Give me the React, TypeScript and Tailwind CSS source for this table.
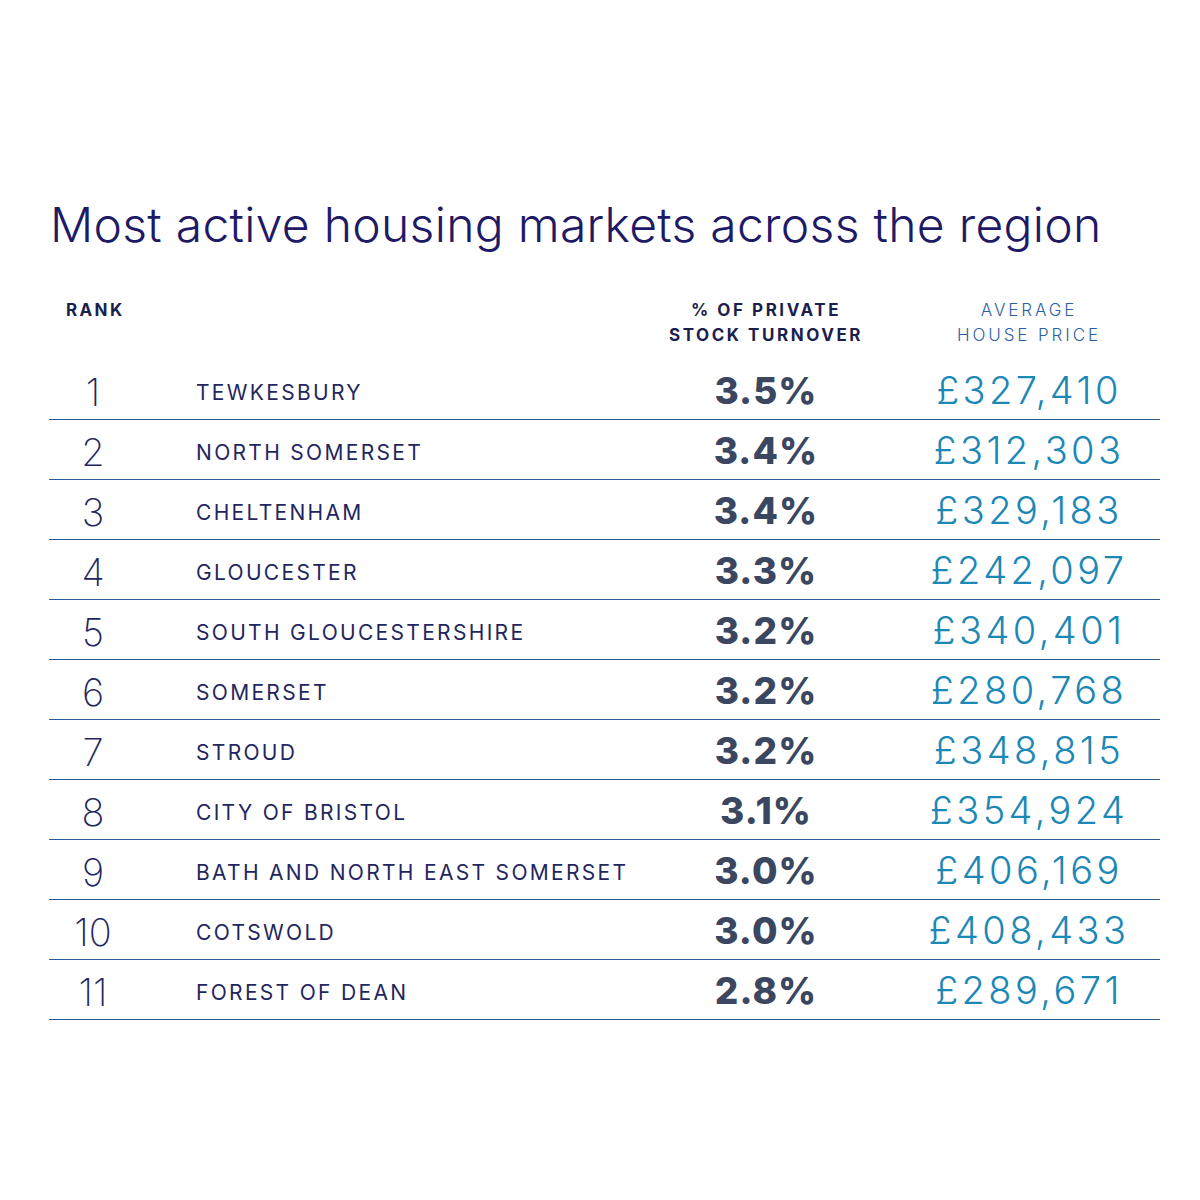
const ROWS = [
  { rank: 1, area: "TEWKESBURY", pct: "3.5%", price: "£327,410" },
  { rank: 2, area: "NORTH SOMERSET", pct: "3.4%", price: "£312,303" },
  { rank: 3, area: "CHELTENHAM", pct: "3.4%", price: "£329,183" },
  { rank: 4, area: "GLOUCESTER", pct: "3.3%", price: "£242,097" },
  { rank: 5, area: "SOUTH GLOUCESTERSHIRE", pct: "3.2%", price: "£340,401" },
  { rank: 6, area: "SOMERSET", pct: "3.2%", price: "£280,768" },
  { rank: 7, area: "STROUD", pct: "3.2%", price: "£348,815" },
  { rank: 8, area: "CITY OF BRISTOL", pct: "3.1%", price: "£354,924" },
  { rank: 9, area: "BATH AND NORTH EAST SOMERSET", pct: "3.0%", price: "£406,169" },
  { rank: 10, area: "COTSWOLD", pct: "3.0%", price: "£408,433" },
  { rank: 11, area: "FOREST OF DEAN", pct: "2.8%", price: "£289,671" },
];

export default function App() {
  return (
    <div className="min-h-[1200px] w-[1200px] bg-white font-['Inter',sans-serif]">
      <div className="pl-[49px] pr-[40px] pt-[196px]">
        <h1 className="pl-px text-[48px] font-light leading-[58px] tracking-[0.3px] text-[#1e1a66]">
          Most active housing markets across the region
        </h1>

        <div className="mt-[44px] grid grid-cols-[88px_1fr_200px_294px] items-start">
          <div className="pl-[17px] text-[17px] font-bold leading-[25px] tracking-[0.14em] text-[#1a1f4e]">
            RANK
          </div>
          <div />
          <div className="text-center text-[17px] font-bold leading-[25px] tracking-[0.15em] text-[#1a1f4e]">
            % OF PRIVATE
            <br />
            STOCK TURNOVER
          </div>
          <div className="pl-8 text-center text-[17px] font-light leading-[25px] tracking-[0.17em] text-[#2d5fa6]">
            AVERAGE
            <br />
            HOUSE PRICE
          </div>
        </div>

        <div className="mt-[12px]">
          {ROWS.map((r) => (
            <div
              key={r.rank}
              className="grid h-[60px] grid-cols-[88px_1fr_200px_294px] items-center border-b-[1.5px] border-[#2b5a98]"
            >
              <div className="pt-1 text-center text-[38px] font-extralight text-[#1f2660]">{r.rank}</div>
              <div className="pl-[59px] pt-1 text-[21px] tracking-[0.11em] text-[#1f2660]">{r.area}</div>
              <div className="text-center text-[37px] font-extrabold tracking-[0.03em] text-[#3b4660]">
                {r.pct}
              </div>
              <div className="pl-8 text-center text-[38px] font-light tracking-[0.09em] text-[#1c88b6]">
                {r.price}
              </div>
            </div>
          ))}
        </div>
      </div>
    </div>
  );
}
